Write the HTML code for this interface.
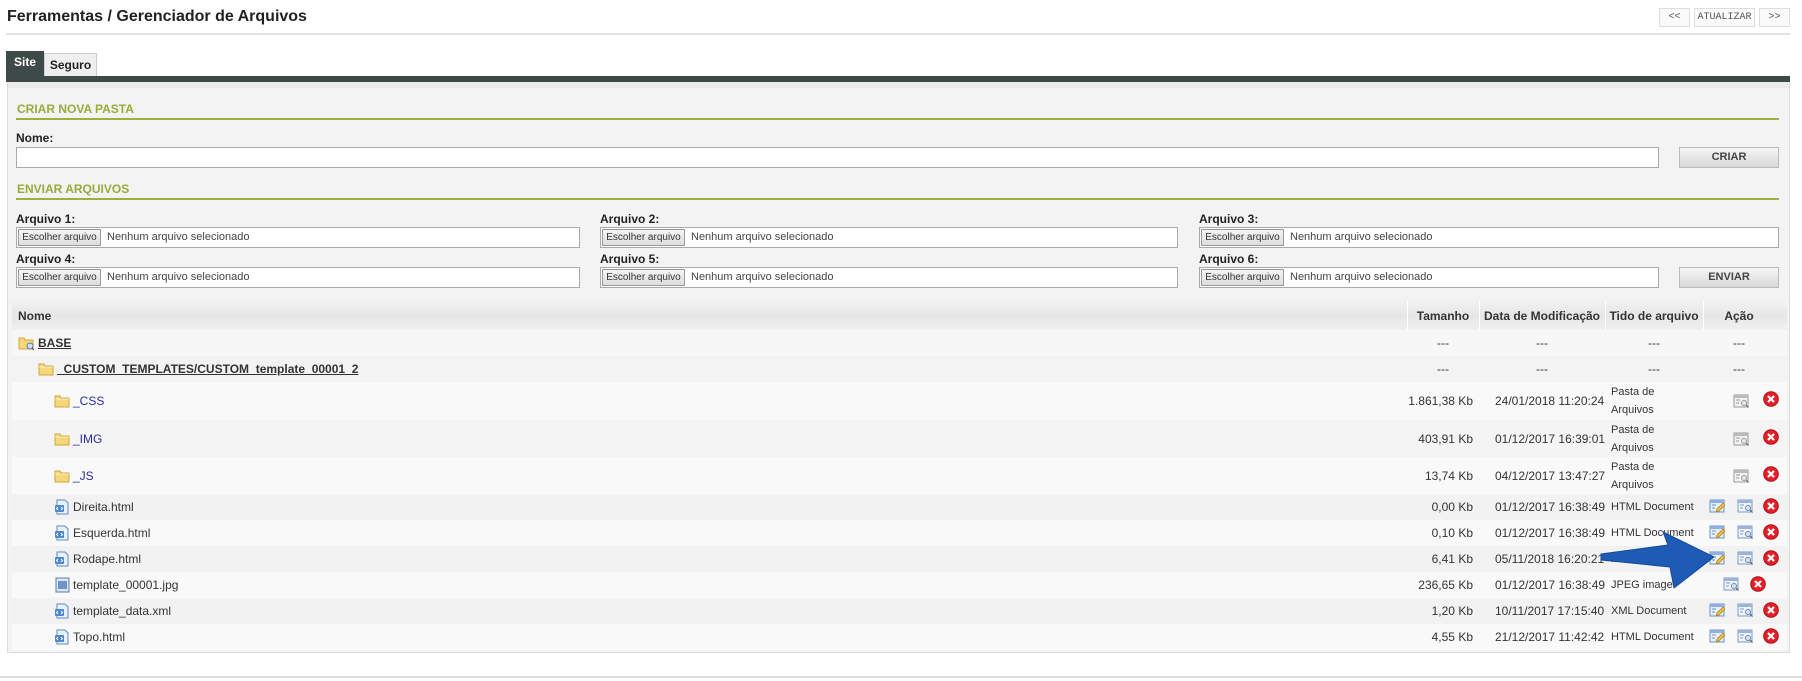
<!DOCTYPE html>
<html><head><meta charset="utf-8"><style>
*{margin:0;padding:0;box-sizing:border-box}
body{width:1802px;height:681px;background:#fff;font-family:"Liberation Sans",sans-serif;font-size:12px;color:#333;position:relative;overflow:hidden}
.a{position:absolute}
h1{position:absolute;left:7px;top:8px;font-size:16px;font-weight:bold;color:#222}
.tb{position:absolute;top:8px;height:19px;border:1px solid #ddd;background:#fafafa;font-family:"Liberation Mono",monospace;font-size:10px;color:#555;text-align:center;line-height:17px}
.sec{position:absolute;left:17px;font-weight:bold;color:#98ab3a;font-size:12px}
.line{position:absolute;left:16px;width:1763px;height:2px;background:#9cb03e}
.lbl{position:absolute;font-weight:bold;color:#222;font-size:12px}
.inp{position:absolute;height:21px;border:1px solid #aaa;background:#fff}
.file{position:absolute;height:21px;border:1px solid #aaa;background:#fff;font-size:11px;color:#444;white-space:nowrap}
.file span.b{position:absolute;left:1px;top:1px;height:17px;width:83px;border:1px solid #999;background:linear-gradient(#f4f4f4,#ddd);text-align:center;line-height:15px;color:#333;font-size:10px;overflow:hidden}
.file span.t{position:absolute;left:90px;top:3px}
.btn{position:absolute;left:1679px;width:100px;height:21px;border:1px solid #bbb;background:linear-gradient(#f6f6f6,#d8d8d8);font-weight:bold;font-size:11px;color:#444;text-align:center;line-height:19px}
.row{position:absolute;left:12px;width:1775px}
.c{position:absolute;top:0;height:100%;display:flex;align-items:center;white-space:nowrap}
.sz{left:0;width:1461px;justify-content:flex-end}
.dt{left:1483px}
.ty{left:1599px;line-height:18px;font-size:11px}
.nm{font-size:12px}
.vl{position:absolute;top:0;height:100%;width:1px;background:#fff}
.ic{position:absolute;width:16px;height:16px}
</style></head><body>
<h1>Ferramentas / Gerenciador de Arquivos</h1>
<div class="tb" style="left:1659px;width:31px">&lt;&lt;</div>
<div class="tb" style="left:1694px;width:61px">ATUALIZAR</div>
<div class="tb" style="left:1759px;width:31px">&gt;&gt;</div>
<div class="a" style="left:6px;top:33px;width:1784px;height:2px;background:#e3e3e3"></div>

<div class="a" style="left:44px;top:53px;width:53px;height:24px;background:#eee;border:1px solid #ccc;font-weight:bold;color:#222;text-align:center;line-height:23px">Seguro</div>
<div class="a" style="left:6px;top:51px;width:38px;height:26px;background:#3e4a47;color:#fff;font-weight:bold;text-align:center;line-height:22px">Site</div>
<div class="a" style="left:6px;top:76px;width:1784px;height:6px;background:#3e4a47"></div>
<div class="a" style="left:7px;top:82px;width:1783px;height:571px;background:#f3f3f3;border:1px solid #ddd;border-top:none"></div>
<div class="a" style="left:8px;top:82px;width:1781px;height:6px;background:#ebebeb"></div>

<div class="sec" style="top:102px">CRIAR NOVA PASTA</div>
<div class="line" style="top:118px"></div>
<div class="lbl" style="left:16px;top:131px">Nome:</div>
<div class="inp" style="left:16px;top:147px;width:1643px"></div>
<div class="btn" style="top:147px">CRIAR</div>
<div class="sec" style="top:182px">ENVIAR ARQUIVOS</div>
<div class="line" style="top:198px"></div>

<div class="lbl" style="left:16px;top:212px">Arquivo 1:</div>
<div class="lbl" style="left:600px;top:212px">Arquivo 2:</div>
<div class="lbl" style="left:1199px;top:212px">Arquivo 3:</div>
<div class="file" style="left:16px;top:227px;width:564px"><span class="b">Escolher arquivo</span><span class="t">Nenhum arquivo selecionado</span></div>
<div class="file" style="left:600px;top:227px;width:578px"><span class="b">Escolher arquivo</span><span class="t">Nenhum arquivo selecionado</span></div>
<div class="file" style="left:1199px;top:227px;width:580px"><span class="b">Escolher arquivo</span><span class="t">Nenhum arquivo selecionado</span></div>
<div class="lbl" style="left:16px;top:252px">Arquivo 4:</div>
<div class="lbl" style="left:600px;top:252px">Arquivo 5:</div>
<div class="lbl" style="left:1199px;top:252px">Arquivo 6:</div>
<div class="file" style="left:16px;top:267px;width:564px"><span class="b">Escolher arquivo</span><span class="t">Nenhum arquivo selecionado</span></div>
<div class="file" style="left:600px;top:267px;width:578px"><span class="b">Escolher arquivo</span><span class="t">Nenhum arquivo selecionado</span></div>
<div class="file" style="left:1199px;top:267px;width:460px"><span class="b">Escolher arquivo</span><span class="t">Nenhum arquivo selecionado</span></div>
<div class="btn" style="top:267px">ENVIAR</div>

<!-- table header -->
<div class="row" style="top:301px;height:29px;background:linear-gradient(#f2f2f2,#e6e6e6,#f0f0f0);font-weight:bold;color:#333">
<div class="c" style="left:6px">Nome</div>
<div class="c" style="left:1395px;width:72px;justify-content:center">Tamanho</div>
<div class="c" style="left:1467px;width:126px;justify-content:center">Data de Modificação</div>
<div class="c" style="left:1593px;width:98px;justify-content:center">Tido de arquivo</div>
<div class="c" style="left:1691px;width:72px;justify-content:center">Ação</div>
<div class="vl" style="left:1395px"></div><div class="vl" style="left:1467px"></div><div class="vl" style="left:1593px"></div><div class="vl" style="left:1691px"></div>
</div>

<svg width="0" height="0" style="position:absolute"><defs>
<g id="fold"><path d="M1 3h5l1 2h8v9H1z" fill="#f5d77a" stroke="#d1a73a"/><path d="M1 6h14" stroke="#fff" opacity=".6"/></g>
<g id="doc"><path d="M3 1h8l3 3v11H3z" fill="#e9f1fb" stroke="#5c8ac6"/><rect x="1" y="6" width="9" height="7" rx="1" fill="#4f86cc"/><path d="M4 8l-1.5 1.5L4 11M7 8l1.5 1.5L7 11" stroke="#fff" fill="none"/></g>
<g id="img"><rect x="2" y="1" width="13" height="14" fill="#dce6f2" stroke="#5a7ba8"/><rect x="4" y="4" width="9" height="8" fill="#6f93c4"/></g>
<g id="edit"><rect x="1" y="2" width="14" height="12" fill="#e6eef8" stroke="#6d93c5"/><rect x="1" y="2" width="14" height="3" fill="#8fb0dc"/><path d="M3 7h4M3 10h3" stroke="#6d93c5"/><path d="M7 14l1-3 6-6 2 2-6 6z" fill="#f0c040" stroke="#a67c1a" stroke-width=".7"/></g>
<g id="view"><rect x="1" y="2" width="14" height="12" fill="#eef3f9" stroke="#7f9cc4"/><rect x="1" y="2" width="14" height="3" fill="#9bb5da"/><path d="M3 7h4M3 10h3" stroke="#7f9cc4"/><circle cx="11" cy="10" r="2.5" fill="#d7e6f5" stroke="#6a89b5"/><path d="M13 12l2.5 2.5" stroke="#555"/></g>
<g id="viewg"><rect x="1" y="2" width="14" height="12" fill="#f2f2f2" stroke="#999"/><rect x="1" y="2" width="14" height="3" fill="#bbb"/><path d="M3 7h4M3 10h3" stroke="#999"/><circle cx="11" cy="10" r="2.5" fill="#e8e8e8" stroke="#999"/><path d="M13 12l2.5 2.5" stroke="#666"/></g>
<g id="del"><circle cx="8" cy="8" r="7.3" fill="#e2202a" stroke="#b01018"/><path d="M5 5l6 6M11 5l-6 6" stroke="#fff" stroke-width="2.2"/></g>
<g id="basef"><path d="M1 3h5l1 2h8v9H1z" fill="#f5d77a" stroke="#d1a73a"/><circle cx="12" cy="11" r="3" fill="#cfe2f5" stroke="#5a7ba8"/><path d="M14 13l2 2" stroke="#444"/></g>
</defs></svg>

<!-- rows -->
<div class="row" style="top:330px;height:26px;background:#f7f7f7">
<svg class="ic" style="left:6px;top:5px" viewBox="0 0 16 16"><use href="#basef"/></svg>
<div class="c nm" style="left:26px;font-weight:bold;text-decoration:underline;color:#333">BASE</div>
<div class="c" style="left:1395px;width:72px;justify-content:center">---</div><div class="c" style="left:1467px;width:126px;justify-content:center">---</div><div class="c" style="left:1593px;width:98px;justify-content:center">---</div><div class="c" style="left:1691px;width:72px;justify-content:center">---</div>
</div>
<div class="row" style="top:356px;height:26px;background:#f3f3f3">
<svg class="ic" style="left:26px;top:5px" viewBox="0 0 16 16"><use href="#fold"/></svg>
<div class="c nm" style="left:45px;font-weight:bold;text-decoration:underline;color:#333">_CUSTOM_TEMPLATES/CUSTOM_template_00001_2</div>
<div class="c" style="left:1395px;width:72px;justify-content:center">---</div><div class="c" style="left:1467px;width:126px;justify-content:center">---</div><div class="c" style="left:1593px;width:98px;justify-content:center">---</div><div class="c" style="left:1691px;width:72px;justify-content:center">---</div>
</div>

<div class="row" style="top:382px;height:38px;background:#f9f9f9">
<svg class="ic" style="left:42px;top:11px" viewBox="0 0 16 16"><use href="#fold"/></svg>
<div class="c nm" style="left:61px;color:#2a2aa0">_CSS</div>
<div class="c sz">1.861,38 Kb</div><div class="c dt">24/01/2018 11:20:24</div><div class="c ty">Pasta de<br>Arquivos</div>
<svg class="ic" style="left:1721px;top:11px" viewBox="0 0 16 16"><use href="#viewg"/></svg>
<svg class="ic" style="left:1751px;top:9px" viewBox="0 0 16 16"><use href="#del"/></svg>
</div>
<div class="row" style="top:420px;height:37px;background:#f4f4f4">
<svg class="ic" style="left:42px;top:11px" viewBox="0 0 16 16"><use href="#fold"/></svg>
<div class="c nm" style="left:61px;color:#2a2aa0">_IMG</div>
<div class="c sz">403,91 Kb</div><div class="c dt">01/12/2017 16:39:01</div><div class="c ty">Pasta de<br>Arquivos</div>
<svg class="ic" style="left:1721px;top:11px" viewBox="0 0 16 16"><use href="#viewg"/></svg>
<svg class="ic" style="left:1751px;top:9px" viewBox="0 0 16 16"><use href="#del"/></svg>
</div>
<div class="row" style="top:457px;height:37px;background:#f9f9f9">
<svg class="ic" style="left:42px;top:11px" viewBox="0 0 16 16"><use href="#fold"/></svg>
<div class="c nm" style="left:61px;color:#2a2aa0">_JS</div>
<div class="c sz">13,74 Kb</div><div class="c dt">04/12/2017 13:47:27</div><div class="c ty">Pasta de<br>Arquivos</div>
<svg class="ic" style="left:1721px;top:11px" viewBox="0 0 16 16"><use href="#viewg"/></svg>
<svg class="ic" style="left:1751px;top:9px" viewBox="0 0 16 16"><use href="#del"/></svg>
</div>

<div class="row" style="top:494px;height:26px;background:#f2f2f2">
<svg class="ic" style="left:42px;top:5px" viewBox="0 0 16 16"><use href="#doc"/></svg>
<div class="c nm" style="left:61px">Direita.html</div>
<div class="c sz">0,00 Kb</div><div class="c dt">01/12/2017 16:38:49</div><div class="c ty">HTML Document</div>
<svg class="ic" style="left:1697px;top:4px" viewBox="0 0 16 16"><use href="#edit"/></svg>
<svg class="ic" style="left:1725px;top:4px" viewBox="0 0 16 16"><use href="#view"/></svg>
<svg class="ic" style="left:1751px;top:4px" viewBox="0 0 16 16"><use href="#del"/></svg>
</div>
<div class="row" style="top:520px;height:26px;background:#f9f9f9">
<svg class="ic" style="left:42px;top:5px" viewBox="0 0 16 16"><use href="#doc"/></svg>
<div class="c nm" style="left:61px">Esquerda.html</div>
<div class="c sz">0,10 Kb</div><div class="c dt">01/12/2017 16:38:49</div><div class="c ty">HTML Document</div>
<svg class="ic" style="left:1697px;top:4px" viewBox="0 0 16 16"><use href="#edit"/></svg>
<svg class="ic" style="left:1725px;top:4px" viewBox="0 0 16 16"><use href="#view"/></svg>
<svg class="ic" style="left:1751px;top:4px" viewBox="0 0 16 16"><use href="#del"/></svg>
</div>
<div class="row" style="top:546px;height:26px;background:#f2f2f2">
<svg class="ic" style="left:42px;top:5px" viewBox="0 0 16 16"><use href="#doc"/></svg>
<div class="c nm" style="left:61px">Rodape.html</div>
<div class="c sz">6,41 Kb</div><div class="c dt">05/11/2018 16:20:21</div><div class="c ty">HTML Document</div>
<svg class="ic" style="left:1697px;top:4px" viewBox="0 0 16 16"><use href="#edit"/></svg>
<svg class="ic" style="left:1725px;top:4px" viewBox="0 0 16 16"><use href="#view"/></svg>
<svg class="ic" style="left:1751px;top:4px" viewBox="0 0 16 16"><use href="#del"/></svg>
</div>
<div class="row" style="top:572px;height:26px;background:#f9f9f9">
<svg class="ic" style="left:42px;top:5px" viewBox="0 0 16 16"><use href="#img"/></svg>
<div class="c nm" style="left:61px">template_00001.jpg</div>
<div class="c sz">236,65 Kb</div><div class="c dt">01/12/2017 16:38:49</div><div class="c ty">JPEG image</div>
<svg class="ic" style="left:1711px;top:4px" viewBox="0 0 16 16"><use href="#view"/></svg>
<svg class="ic" style="left:1738px;top:4px" viewBox="0 0 16 16"><use href="#del"/></svg>
</div>
<div class="row" style="top:598px;height:26px;background:#f2f2f2">
<svg class="ic" style="left:42px;top:5px" viewBox="0 0 16 16"><use href="#doc"/></svg>
<div class="c nm" style="left:61px">template_data.xml</div>
<div class="c sz">1,20 Kb</div><div class="c dt">10/11/2017 17:15:40</div><div class="c ty">XML Document</div>
<svg class="ic" style="left:1697px;top:4px" viewBox="0 0 16 16"><use href="#edit"/></svg>
<svg class="ic" style="left:1725px;top:4px" viewBox="0 0 16 16"><use href="#view"/></svg>
<svg class="ic" style="left:1751px;top:4px" viewBox="0 0 16 16"><use href="#del"/></svg>
</div>
<div class="row" style="top:624px;height:26px;background:#f9f9f9">
<svg class="ic" style="left:42px;top:5px" viewBox="0 0 16 16"><use href="#doc"/></svg>
<div class="c nm" style="left:61px">Topo.html</div>
<div class="c sz">4,55 Kb</div><div class="c dt">21/12/2017 11:42:42</div><div class="c ty">HTML Document</div>
<svg class="ic" style="left:1697px;top:4px" viewBox="0 0 16 16"><use href="#edit"/></svg>
<svg class="ic" style="left:1725px;top:4px" viewBox="0 0 16 16"><use href="#view"/></svg>
<svg class="ic" style="left:1751px;top:4px" viewBox="0 0 16 16"><use href="#del"/></svg>
</div>

<!-- arrow -->
<svg class="a" style="left:0;top:0" width="1802" height="681"><polygon points="1601,554 1668,545 1663,532 1714,557 1674,588 1670,567 1601,560" fill="#1e5bb5" stroke="#174a98" stroke-width="1" stroke-linejoin="round"/></svg>

<div class="a" style="left:0;top:676px;width:1802px;height:2px;background:#ddd"></div>
</body></html>
